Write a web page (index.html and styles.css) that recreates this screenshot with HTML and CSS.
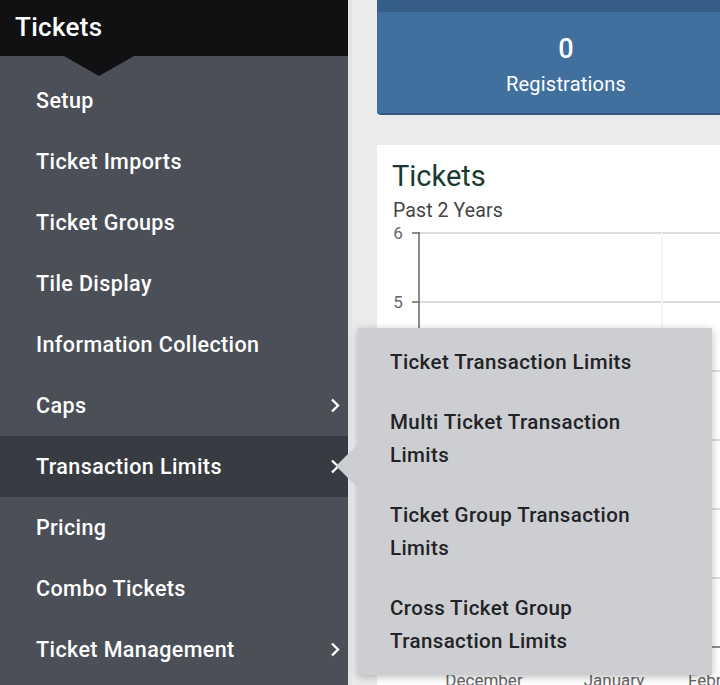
FILE: index.html
```html
<!DOCTYPE html>
<html lang="en">

<head>
    <meta charset="UTF-8">
    <meta name="viewport" content="width=device-width, initial-scale=1.0">
    <title>Tickets</title>
    <link rel="stylesheet" href="styles.css">
</head>

<body>
    <div class="layout">
        <nav class="sidebar">
            <div class="sidebar-header">Tickets</div>
            <ul class="menu">
                <li>Setup</li>
                <li>Ticket Imports</li>
                <li>Ticket Groups</li>
                <li>Tile Display</li>
                <li>Information Collection</li>
                <li class="has-sub">Caps
                    <svg class="chevron" viewBox="0 0 10 16"><polyline points="2,2 8,8 2,14" /></svg>
                </li>
                <li class="has-sub active">Transaction Limits
                    <svg class="chevron" viewBox="0 0 10 16"><polyline points="2,2 8,8 2,14" /></svg>
                </li>
                <li>Pricing</li>
                <li>Combo Tickets</li>
                <li class="has-sub">Ticket Management
                    <svg class="chevron" viewBox="0 0 10 16"><polyline points="2,2 8,8 2,14" /></svg>
                </li>
            </ul>
        </nav>

        <main class="content">
            <div class="stat-card">
                <div class="stat-number">0</div>
                <div class="stat-label">Registrations</div>
            </div>

            <div class="chart-card">
                <h2 class="chart-title">Tickets</h2>
                <div class="chart-subtitle">Past 2 Years</div>
                <svg class="chart" width="343" height="470">
                    <g class="grid">
                        <line x1="42" y1="11" x2="343" y2="11" />
                        <line x1="42" y1="80" x2="343" y2="80" />
                        <line x1="42" y1="149" x2="343" y2="149" />
                        <line x1="42" y1="218" x2="343" y2="218" />
                        <line x1="42" y1="287" x2="343" y2="287" />
                        <line x1="42" y1="356" x2="343" y2="356" />
                        <line x1="285" y1="11" x2="285" y2="425" class="faint" />
                    </g>
                    <g class="axis">
                        <line x1="42" y1="10" x2="42" y2="425" />
                        <line x1="35" y1="11" x2="42" y2="11" />
                        <line x1="35" y1="80" x2="42" y2="80" />
                        <line x1="42" y1="425" x2="343" y2="425" />
                    </g>
                    <g class="labels">
                        <text x="21" y="17">6</text>
                        <text x="21" y="86">5</text>
                        <text x="107" y="464">December</text>
                        <text x="237" y="464">January</text>
                        <text x="344" y="464">February</text>
                    </g>
                </svg>
            </div>
        </main>

        <div class="submenu">
            <ul>
                <li>Ticket Transaction Limits</li>
                <li>Multi Ticket Transaction Limits</li>
                <li>Ticket Group Transaction Limits</li>
                <li>Cross Ticket Group Transaction Limits</li>
            </ul>
        </div>
    </div>
</body>

</html>
```

FILE: styles.css
```css
body {
    margin: 0;
    font-family: 'Roboto', 'Liberation Sans', sans-serif;
    background-color: #ebebeb;
    overflow: hidden;
}

.layout {
    display: flex;
    position: relative;
    height: 685px;
    overflow: hidden;
}

.sidebar {
    width: 348px;
    flex-shrink: 0;
    background-color: #4a4f58;
    color: #fff;
}

.sidebar-header {
    position: relative;
    height: 56px;
    background-color: #111113;
    font-size: 26px;
    font-weight: 500;
    letter-spacing: 0.3px;
    line-height: 54px;
    padding-left: 15px;
}

.sidebar-header::after {
    content: '';
    position: absolute;
    left: 64px;
    top: 56px;
    border-left: 35px solid transparent;
    border-right: 35px solid transparent;
    border-top: 20px solid #111113;
}

.menu {
    list-style-type: none;
    padding: 14px 0 0;
    margin: 0;
}

.menu li {
    display: flex;
    justify-content: space-between;
    align-items: center;
    height: 61px;
    padding: 0 8px 0 36px;
    font-size: 21.5px;
    font-weight: 500;
    letter-spacing: 0.4px;
}

.menu li.active {
    background-color: #383b42;
}

.chevron {
    width: 10px;
    height: 17px;
    fill: none;
    stroke: #fff;
    stroke-width: 2.4;
}

.content {
    flex: 1;
    min-width: 0;
    border-left: 4px solid #e2e4e6;
    padding-left: 25px;
}

.stat-card {
    width: 378px;
    height: 115px;
    box-sizing: border-box;
    background-color: #41709f;
    border-top: 12px solid #355f89;
    border-bottom: 2px solid #355a80;
    border-radius: 0 0 0 4px;
    color: #fff;
    text-align: center;
    padding-top: 21px;
}

.stat-number {
    font-size: 27px;
    font-weight: 500;
    line-height: 32px;
}

.stat-label {
    font-size: 20px;
    letter-spacing: 0.2px;
    line-height: 26px;
    margin-top: 6px;
}

.chart-card {
    margin-top: 30px;
    background-color: #fff;
    height: 540px;
    overflow: hidden;
}

.chart-title {
    margin: 0 0 7px;
    padding: 14px 0 0 15px;
    font-size: 29px;
    font-weight: 400;
    line-height: 34px;
    color: #1b3a31;
}

.chart-subtitle {
    padding-left: 16px;
    font-size: 19.5px;
    letter-spacing: 0.1px;
    line-height: 22px;
    color: #444;
}

.chart {
    display: block;
}

.grid line {
    stroke: #dddddd;
    stroke-width: 2;
}

.grid line.faint {
    stroke: #f6f6f6;
}

.axis line {
    stroke: #666;
    stroke-width: 1.5;
}

.labels text {
    font-family: 'Roboto', 'Liberation Sans', sans-serif;
    font-size: 17px;
    fill: #666;
    text-anchor: middle;
}

.submenu {
    position: absolute;
    left: 358px;
    top: 328px;
    width: 354px;
    height: 347px;
    background-color: #cdced2;
    box-shadow: 0 2px 8px rgba(0, 0, 0, 0.25);
}

.submenu::before {
    content: '';
    position: absolute;
    left: -22px;
    top: 116px;
    border-top: 22px solid transparent;
    border-bottom: 22px solid transparent;
    border-right: 22px solid #cdced2;
}

.submenu ul {
    list-style-type: none;
    margin: 0;
    padding: 4px 50px 0 32px;
}

.submenu li {
    padding: 13.5px 0;
    font-size: 20.5px;
    font-weight: 500;
    letter-spacing: 0.4px;
    line-height: 33px;
    color: #222326;
}
```
